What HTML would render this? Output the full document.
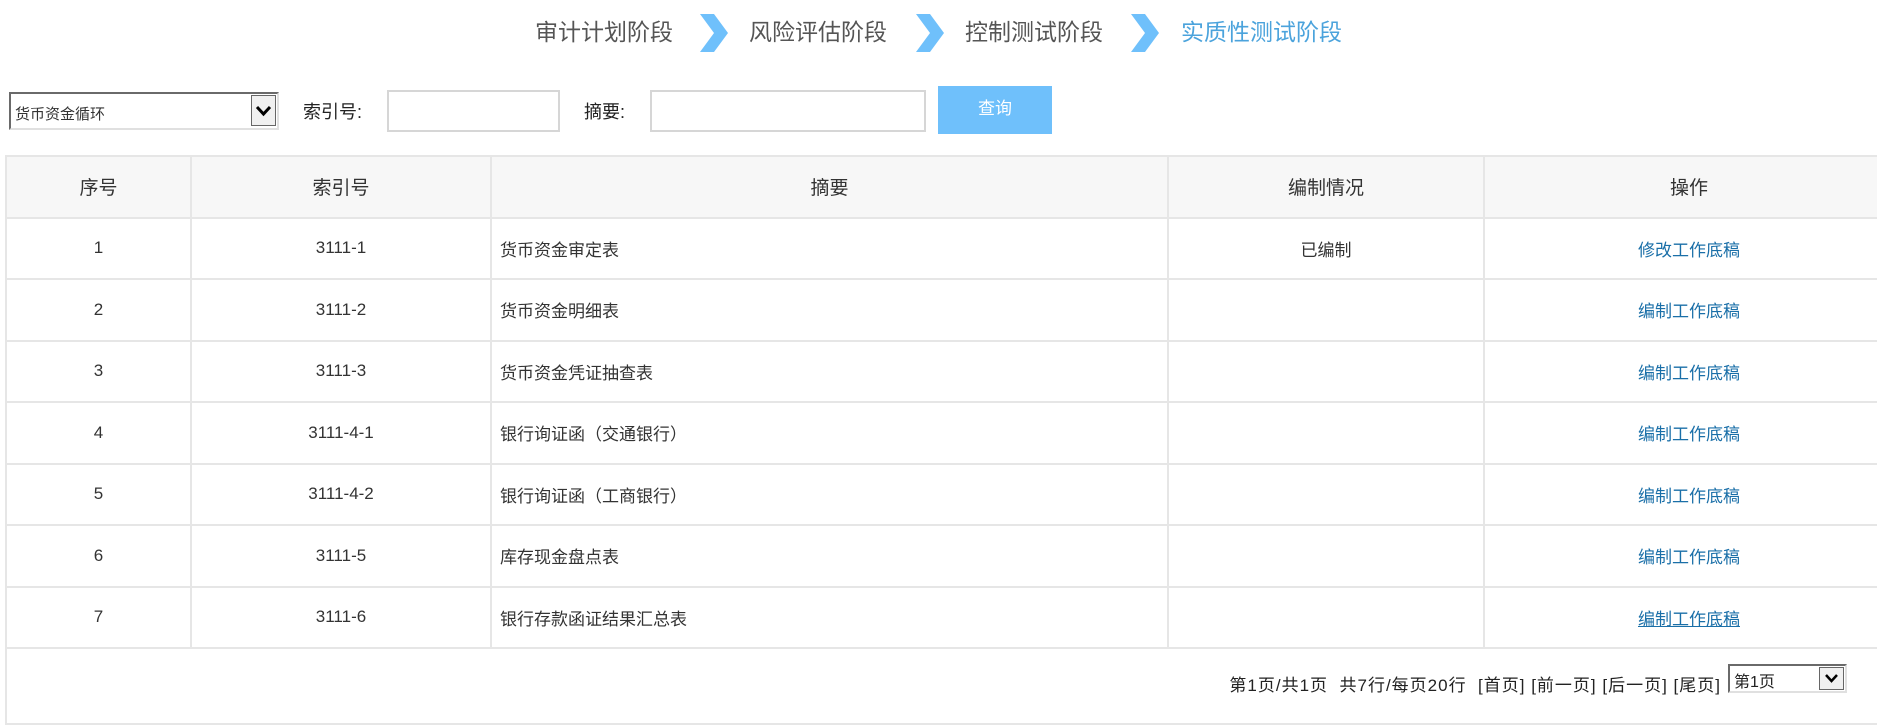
<!DOCTYPE html>
<html><head><meta charset="utf-8"><style>
body{margin:0;width:1877px;height:725px;overflow:hidden;background:#fff;font-family:"Liberation Sans","Noto Sans CJK SC",sans-serif;color:#333;position:relative}
.a{position:absolute}
.bc{top:14px;font-size:23px;color:#555;line-height:36px;white-space:nowrap}
.chev{position:absolute;top:14px}
input.i{position:absolute;border:2px solid #d6d6d6;box-sizing:border-box;background:#fff}
table{position:absolute;left:5px;top:155px;border-collapse:collapse;width:1890px;table-layout:fixed;font-size:17px}
td,th{border:2px solid #e6e6e6;height:59.5px;padding:0;text-align:center;font-weight:normal;vertical-align:middle}
th{background:#f7f7f7;font-size:19px}
td.l{text-align:left;padding-left:8px}
a{color:#1a6fa8;text-decoration:none}
.dd{position:absolute;right:1px;top:1px;background:#f0f0f0;border:1px solid #666;box-sizing:border-box}
</style></head><body>
<div class="a bc" style="left:535px">审计计划阶段</div>
<svg class="chev" style="left:698px" width="32" height="38" viewBox="0 0 32 38"><path d="M2 0h14l14 19-14 19H2l14-19z" fill="#6fc0fb"/></svg>
<div class="a bc" style="left:749px">风险评估阶段</div>
<svg class="chev" style="left:914px" width="32" height="38" viewBox="0 0 32 38"><path d="M2 0h14l14 19-14 19H2l14-19z" fill="#6fc0fb"/></svg>
<div class="a bc" style="left:965px">控制测试阶段</div>
<svg class="chev" style="left:1129px" width="32" height="38" viewBox="0 0 32 38"><path d="M2 0h14l14 19-14 19H2l14-19z" fill="#6fc0fb"/></svg>
<div class="a bc" style="left:1181px;color:#4ba3dc">实质性测试阶段</div>

<div class="a" style="left:9px;top:92px;width:270px;height:38px;box-sizing:border-box;border:2px solid;border-color:#6a6a6a #e0e0e0 #e0e0e0 #6a6a6a;background:#fff">
<span class="a" style="left:4px;top:9px;font-size:15px;color:#333">货币资金循环</span>
<div class="dd" style="width:25px;height:31px"><svg width="23" height="29" viewBox="0 0 23 29"><path d="M5 11l6.5 7 6.5-7" fill="none" stroke="#000" stroke-width="3"/></svg></div>
</div>
<div class="a" style="left:303px;top:98px;font-size:18px;color:#222">索引号:</div>
<input class="i" style="left:387px;top:90px;width:173px;height:42px">
<div class="a" style="left:584px;top:98px;font-size:18px;color:#222">摘要:</div>
<input class="i" style="left:650px;top:90px;width:276px;height:42px">
<div class="a" style="left:938px;top:86px;width:114px;height:48px;background:#6fc0fb;color:#fff;font-size:17px;text-align:center;line-height:46px">查询</div>

<table>
<colgroup><col style="width:185px"><col style="width:300px"><col style="width:677px"><col style="width:316px"><col></colgroup>
<tr><th>序号</th><th>索引号</th><th>摘要</th><th>编制情况</th><th>操作</th></tr>
<tr><td>1</td><td>3111-1</td><td class="l">货币资金审定表</td><td>已编制</td><td><a>修改工作底稿</a></td></tr>
<tr><td>2</td><td>3111-2</td><td class="l">货币资金明细表</td><td></td><td><a>编制工作底稿</a></td></tr>
<tr><td>3</td><td>3111-3</td><td class="l">货币资金凭证抽查表</td><td></td><td><a>编制工作底稿</a></td></tr>
<tr><td>4</td><td>3111-4-1</td><td class="l">银行询证函（交通银行）</td><td></td><td><a>编制工作底稿</a></td></tr>
<tr><td>5</td><td>3111-4-2</td><td class="l">银行询证函（工商银行）</td><td></td><td><a>编制工作底稿</a></td></tr>
<tr><td>6</td><td>3111-5</td><td class="l">库存现金盘点表</td><td></td><td><a>编制工作底稿</a></td></tr>
<tr><td>7</td><td>3111-6</td><td class="l">银行存款函证结果汇总表</td><td></td><td><a style="text-decoration:underline">编制工作底稿</a></td></tr>
<tr><td colspan="5" style="height:74px;border-bottom:2px solid #e6e6e6"></td></tr>
</table>

<div class="a" style="right:156px;top:671px;font-size:17px;color:#222;white-space:nowrap;letter-spacing:1px">第1页/共1页&nbsp; 共7行/每页20行&nbsp; [首页] [前一页] [后一页] [尾页]</div>
<div class="a" style="left:1728px;top:664px;width:119px;height:29px;box-sizing:border-box;border:2px solid;border-color:#6a6a6a #e0e0e0 #e0e0e0 #6a6a6a;background:#fff">
<span class="a" style="left:4px;top:2px;font-size:16px;color:#222">第1页</span>
<div class="dd" style="width:25px;height:23px"><svg width="23" height="21" viewBox="0 0 23 21"><path d="M6 7l5.5 6 5.5-6" fill="none" stroke="#000" stroke-width="2.5"/></svg></div>
</div>
</body></html>
